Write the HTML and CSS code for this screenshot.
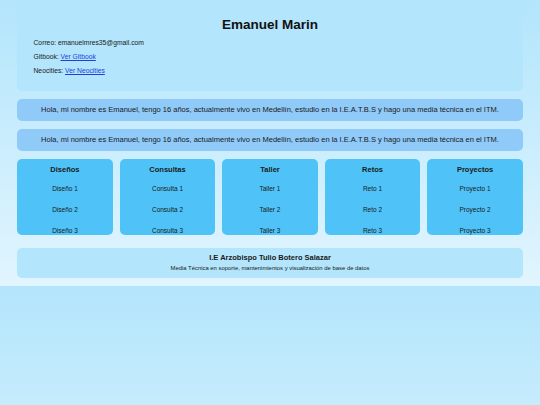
FILE: index.html
```html
<!DOCTYPE html>
<html lang="es">
<head>
<meta charset="utf-8">
<title>Emanuel Marin</title>
<link rel="stylesheet" href="styles.css">
</head>
<body>
<main class="page">
  <header class="profile">
    <h1 class="profile-name">Emanuel Marin</h1>
    <p class="profile-line">Correo: emanuelmres35@gmail.com</p>
    <p class="profile-line">Gitbook: <a href="#">Ver Gitbook</a></p>
    <p class="profile-line">Neocities: <a href="#">Ver Neocities</a></p>
  </header>

  <section class="intro">Hola, mi nombre es Emanuel, tengo 16 años, actualmente vivo en Medellín, estudio en la I.E.A.T.B.S y hago una media técnica en el ITM.</section>
  <section class="intro">Hola, mi nombre es Emanuel, tengo 16 años, actualmente vivo en Medellín, estudio en la I.E.A.T.B.S y hago una media técnica en el ITM.</section>

  <section class="cards">
    <div class="card">
      <h3 class="card-title">Diseños</h3>
      <p class="card-item">Diseño 1</p>
      <p class="card-item">Diseño 2</p>
      <p class="card-item">Diseño 3</p>
    </div>
    <div class="card">
      <h3 class="card-title">Consultas</h3>
      <p class="card-item">Consulta 1</p>
      <p class="card-item">Consulta 2</p>
      <p class="card-item">Consulta 3</p>
    </div>
    <div class="card">
      <h3 class="card-title">Taller</h3>
      <p class="card-item">Taller 1</p>
      <p class="card-item">Taller 2</p>
      <p class="card-item">Taller 3</p>
    </div>
    <div class="card">
      <h3 class="card-title">Retos</h3>
      <p class="card-item">Reto 1</p>
      <p class="card-item">Reto 2</p>
      <p class="card-item">Reto 3</p>
    </div>
    <div class="card">
      <h3 class="card-title">Proyectos</h3>
      <p class="card-item">Proyecto 1</p>
      <p class="card-item">Proyecto 2</p>
      <p class="card-item">Proyecto 3</p>
    </div>
  </section>

  <footer class="school">
    <h3 class="school-name">I.E Arzobispo Tulio Botero Salazar</h3>
    <p class="school-desc">Media Técnica en soporte, mantenimientos y visualización de base de datos</p>
  </footer>
</main>
</body>
</html>
```

FILE: styles.css
```css
body {
  margin: 0;
  font-family: "Liberation Sans", Arial, sans-serif;
  color: #1a1a1a;
  background: linear-gradient(to bottom, #b3e5fc, #e1f5fe);
}

.page {
  padding: 10px 17px 8px;
}

.profile {
  background: #b3e5fc;
  border-radius: 5px;
  padding: 7px 16.5px 12.3px;
}

.profile-name {
  margin: 0 0 3.5px;
  font-size: 13.5px;
  line-height: 15px;
  text-align: center;
  color: #111;
}

.profile-line {
  margin: 0;
  font-size: 6.75px;
  line-height: 14.3px;
}

.profile-line a {
  color: #1f3fe0;
}

.intro {
  margin-top: 8.6px;
  background: #90caf9;
  border-radius: 5px;
  padding: 6.7px 10px;
  font-size: 7.5px;
  line-height: 8px;
  text-align: center;
}

.cards {
  margin-top: 8.6px;
  display: grid;
  grid-template-columns: repeat(5, 1fr);
  gap: 6.6px;
}

.card {
  height: 75.5px;
  background: #4fc3f7;
  border-radius: 5px;
  padding-top: 6px;
  box-sizing: border-box;
  text-align: center;
}

.card-title {
  margin: 0 0 4px;
  font-size: 7.5px;
  line-height: 9px;
}

.card-item {
  margin: 0;
  font-size: 6.5px;
  line-height: 21px;
}

.school {
  margin-top: 12.8px;
  background: #b3e5fc;
  border-radius: 5px;
  padding: 5px 10px 5.5px;
  text-align: center;
}

.school-name {
  margin: 0 0 2px;
  font-size: 7.5px;
  line-height: 9px;
}

.school-desc {
  margin: 0;
  font-size: 5.9px;
  line-height: 9px;
}
```
